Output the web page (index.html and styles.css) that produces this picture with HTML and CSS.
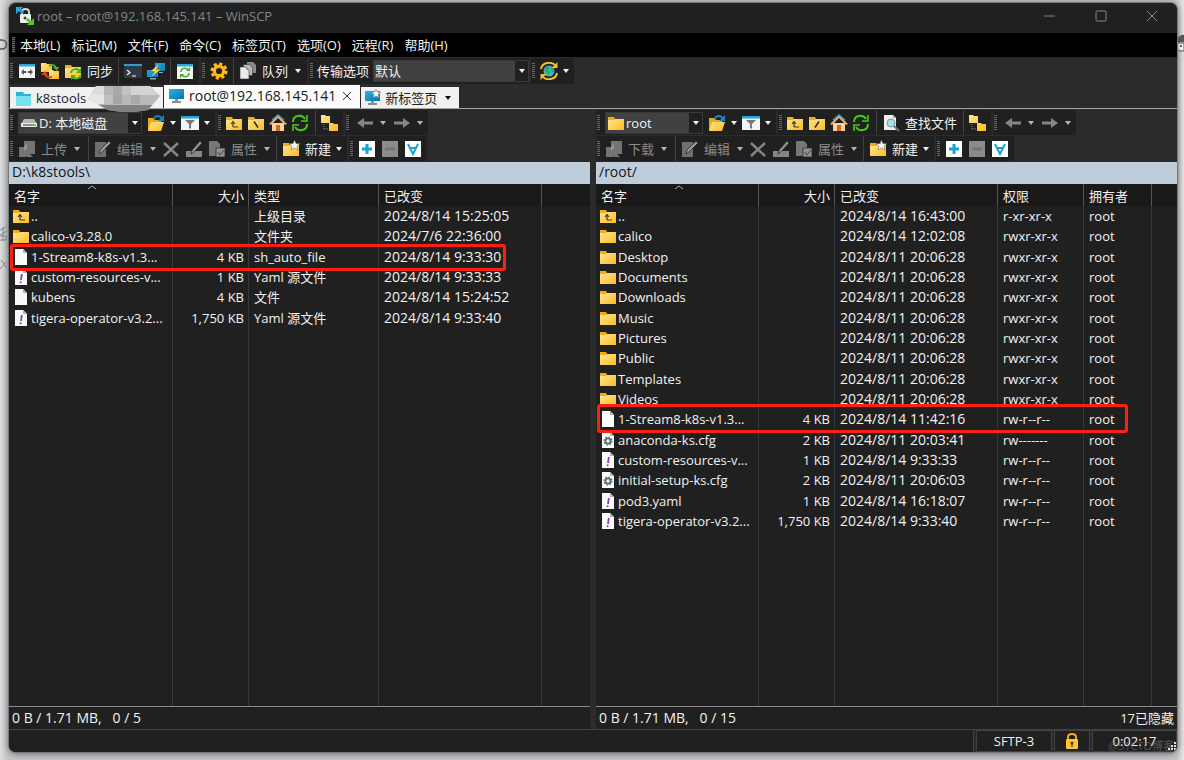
FILE: index.html
```html
<!DOCTYPE html>
<html lang="zh-CN">
<head>
<meta charset="utf-8">
<title>root – root@192.168.145.141 – WinSCP</title>
<link rel="stylesheet" href="styles.css">
</head>
<body>
<svg class="defs" aria-hidden="true">
  <defs>
    <linearGradient id="gold" x1="0" y1="0" x2="1" y2="1"><stop offset="0" stop-color="#ffe596"/><stop offset="1" stop-color="#fbbd1e"/></linearGradient>
    <linearGradient id="screen" x1="0" y1="0" x2="1" y2="1"><stop offset="0" stop-color="#27b7dc"/><stop offset="1" stop-color="#0d6fb5"/></linearGradient>
    <symbol id="folder" viewBox="0 0 18 18"><path d="M1 3h6l1 2h9v11H1z" fill="#f5ac12"/><path d="M1 6h6l1-1h9v11H1z" fill="url(#gold)"/></symbol>
    <symbol id="folder-up" viewBox="0 0 18 18"><use href="#folder"/><path d="M8 13V8M6 10l2-2.500 2 2.500M8 13h5" fill="none" stroke="#4a3c18" stroke-width="1.200"/></symbol>
    <symbol id="folder-root" viewBox="0 0 18 18"><use href="#folder"/><path d="M7 7.500l4 6" stroke="#2c2616" stroke-width="1.500"/></symbol>
    <symbol id="folder-slash" viewBox="0 0 18 18"><use href="#folder"/><path d="M11 7.500l-4 6" stroke="#2c2616" stroke-width="1.500"/></symbol>
    <symbol id="folder-open" viewBox="0 0 18 18"><path d="M1 4h5l2 2h6v10H1z" fill="#f0a80f"/><path d="M4 8h13l-3 9H1z" fill="url(#gold)"/><path d="M7 5c1-4 6-4 8 0" fill="none" stroke="#1b82c6" stroke-width="2"/><path d="M17 1v6h-6z" fill="#1b82c6"/></symbol>
    <symbol id="folder-new" viewBox="0 0 18 18"><use href="#folder"/><path d="M12.500 0l1.500 3.500 4 .300-3 2.500 1 3.700-3.500-2-3.500 2 1-3.700-3-2.500 4-.300z" fill="#f7f7f7" stroke="#555" stroke-width=".5"/></symbol>
    <symbol id="panels" viewBox="0 0 18 18"><path d="M1 2h16v14H1z" fill="#f4f4f4"/><path d="M1 2h16v2.500H1z" fill="#27a9da"/><path d="M3 10l3-3v2h6V7l3 3-3 3v-2H6v2z" fill="#555"/><path d="M9 6v8" stroke="#fff" stroke-width="1.500"/></symbol>
    <symbol id="compare" viewBox="0 0 18 18"><path d="M0 1h5l1 1h5v8H0z" fill="url(#gold)"/><path d="M8 8h4l1 1h5v8H8z" fill="url(#gold)"/><path d="M8 4c3-2 6-1 7 2" fill="none" stroke="#44b51b" stroke-width="2"/><path d="M12 5h6l-2 4z" fill="#44b51b"/><path d="M11 15c-4 1-6 0-7-3" fill="none" stroke="#dc431c" stroke-width="2"/><path d="M0 13l4-4 3 4z" fill="#dc431c"/></symbol>
    <symbol id="folder-sync" viewBox="0 0 18 18"><use href="#folder"/><path d="M7 11c1-5 7-5 9-1M17 13c-2 5-8 4-9 1" fill="none" stroke="#48b31c" stroke-width="2"/><path d="M17 6v5h-5zM7 18v-5h5z" fill="#48b31c"/></symbol>
    <symbol id="console" viewBox="0 0 18 18"><path d="M0 2h18v14H0z" fill="#323a45"/><path d="M0 2h18v2H0z" fill="#2b9fce"/><path d="M3 8l3 2.500L3 13M8 14h4" fill="none" stroke="#f4f4f4" stroke-width="1.200"/></symbol>
    <symbol id="putty" viewBox="0 0 18 18"><path d="M8 1h10v8H8zM0 8h11v7H0z" fill="url(#screen)"/><path d="M3 16h6v1.500H3zM12 10h4v1h-4z" fill="#9ba4ad"/><path d="M12 2L4 9l4 .500L4 15l9-7-4-.500z" fill="#ffd33b"/></symbol>
    <symbol id="arrows" viewBox="0 0 18 18"><path d="M2 8c0-7 9-8 12-3M16 10c0 7-9 8-12 3" fill="none" stroke="currentColor" stroke-width="2"/><path d="M16 1v6h-6M2 17v-6h6" fill="none" stroke="currentColor" stroke-width="1.600"/></symbol>
    <symbol id="keep-sync" viewBox="0 0 18 18"><path d="M1 2h16v15H1z" fill="#f5f5f5"/><path d="M1 2h16v2.500H1z" fill="#2da9d8"/><path d="M5 10c0-4 5-5 7-2M13 11c0 4-5 5-7 2" fill="none" stroke="#46ac22" stroke-width="1.500"/><path d="M14 5v4h-4zM4 16v-4h4z" fill="#46ac22"/></symbol>
    <symbol id="gear" viewBox="0 0 18 18"><circle cx="9" cy="9" r="4.800" fill="none" stroke="#ffb916" stroke-width="3.400"/><circle cx="9" cy="9" r="7.300" fill="none" stroke="#ffb916" stroke-width="2.600" stroke-dasharray="3.200 2.530"/></symbol>
    <symbol id="queue" viewBox="0 0 18 18"><path d="M8 0h6l3 3v8H8z" fill="#8b8b8b"/><path d="M4.500 2.500h6l3 3v8h-9z" fill="#bcbcbc" stroke="#333" stroke-width=".6"/><path d="M1 5h6l3 3v9H1z" fill="#ececec" stroke="#333" stroke-width=".6"/><path d="M7 5v3h3" fill="#999"/></symbol>
    <symbol id="globe" viewBox="0 0 18 18"><circle cx="9" cy="9" r="5.500" fill="#36b8d4"/><path d="M5 6l3-2 2 2-2 2 2 3-2 2-3-4zM11 5l3 2v4l-3-2z" fill="#3fa344"/><path d="M1 7c1-7 11-8 15-3M17 11c-1 7-11 8-15 3" fill="none" stroke="#f8bf28" stroke-width="2"/><path d="M17.500 0v6h-6zM.500 18v-6h6z" fill="#f8bf28"/></symbol>
    <symbol id="drive" viewBox="0 0 18 18"><path d="M4 5h10l3 5H1z" fill="#b6b6b6"/><rect x="1" y="9" width="16" height="4" rx="1" fill="#ededed"/><path d="M3 11h11" stroke="#333"/><path d="M14 10h2v2h-2z" fill="#52e226"/></symbol>
    <symbol id="filter" viewBox="0 0 18 18"><path d="M0 2h18v14H0z" fill="#f4f4f4"/><path d="M0 2h18v2.500H0z" fill="#20a6d8"/><path d="M4 6h10l-4 4v5l-2-1v-4z" fill="#777"/></symbol>
    <symbol id="home" viewBox="0 0 18 18"><path d="M3 9h12v8H3z" fill="#f8d5a0"/><path d="M7 11h4v6H7z" fill="#dc6422"/><path d="M0 10L9 1l9 9-2 1-7-7-7 7z" fill="#eeae65"/><path d="M3 6l6-5 6 5" fill="none" stroke="#409dcc" stroke-width="1.500"/></symbol>
    <symbol id="tree" viewBox="0 0 18 18"><path d="M1 1h4l1 1h4v7H1zM9 9h4l1 1h4v7H9z" fill="url(#gold)"/><path d="M4 10v5h4" fill="none" stroke="#888" stroke-dasharray="1 1"/></symbol>
    <symbol id="back" viewBox="0 0 18 18"><path d="M1 9l7-5v3.500h9v3H8V14z" fill="#858585"/></symbol>
    <symbol id="forward" viewBox="0 0 18 18"><path d="M17 9l-7-5v3.500H1v3h9V14z" fill="#858585"/></symbol>
    <symbol id="transfer" viewBox="0 0 18 18"><path d="M1 7h7v10H1zM6 1h11v13h-5l3 3H9l-3-4z" fill="#747474"/><path d="M6 7l3-3v4l-3 3" fill="#999"/></symbol>
    <symbol id="edit" viewBox="0 0 18 18"><path d="M1 2h11v15H1z" fill="#6f6f6f"/><path d="M5 14l1-4 9-9 2 2-9 9z" fill="#999" stroke="#222" stroke-width=".7"/></symbol>
    <symbol id="delete" viewBox="0 0 18 18"><path d="M2 3l14 13M16 3L2 16" stroke="#858585" stroke-width="2.400"/></symbol>
    <symbol id="rename" viewBox="0 0 18 18"><path d="M1 11h16v6H1z" fill="#858585"/><path d="M6 14l1-4 8-9 2 2-8 9z" fill="#929292" stroke="#222" stroke-width=".7"/></symbol>
    <symbol id="properties" viewBox="0 0 18 18"><path d="M1 1h8l3 3v12H1z" fill="#777"/><path d="M8 8h9v9H8z" fill="#929292" stroke="#222" stroke-width=".7"/><path d="M10 12l2 3 4-5" fill="none" stroke="#444"/></symbol>
    <symbol id="find" viewBox="0 0 18 18"><path d="M2 1h9l3 3v12H2z" fill="#efefef"/><path d="M11 1v3h3" fill="#aaa"/><circle cx="9" cy="9" r="4" fill="#9fe2ee" stroke="#8a9699"/><path d="M12 12l5 5" stroke="#63777d" stroke-width="2"/></symbol>
    <symbol id="plus" viewBox="0 0 18 18"><path d="M1 1h16v16H1z" fill="#fff"/><path d="M9 4v10M4 9h10" stroke="#18a3d5" stroke-width="3"/></symbol>
    <symbol id="minus" viewBox="0 0 18 18"><path d="M1 1h16v16H1z" fill="#8b8b8b"/><path d="M4 9h10" stroke="#747474" stroke-width="3"/></symbol>
    <symbol id="select-all" viewBox="0 0 18 18"><path d="M1 1h16v16H1z" fill="#fff"/><path d="M4 4l5 10 5-10M6 8h6" fill="none" stroke="#18a3d5" stroke-width="2"/></symbol>
    <symbol id="file" viewBox="0 0 18 18"><path d="M3 1h8l4 4v12H3z" fill="#fafafa"/><path d="M11 1v4h4z" fill="#b5b5b5"/></symbol>
    <symbol id="yaml" viewBox="0 0 18 18"><use href="#file"/><path d="M9.800 6L9 12" stroke="#8242ab" stroke-width="1.800"/><circle cx="8.600" cy="14.200" r="1" fill="#8242ab"/></symbol>
    <symbol id="config" viewBox="0 0 18 18"><use href="#file"/><circle cx="9" cy="10" r="2.600" fill="none" stroke="#526a76" stroke-width="1.800"/><circle cx="9" cy="10" r="4" fill="none" stroke="#526a76" stroke-width="1.200" stroke-dasharray="1.500 1.640"/></symbol>
    <symbol id="monitor" viewBox="0 0 18 18"><path d="M2 2h15v10H2z" fill="url(#screen)"/><path d="M8 12h3v2h3v2H5v-2h3z" fill="#879198"/></symbol>
    <symbol id="monitor-new" viewBox="0 0 18 18"><use href="#monitor"/><path d="M13 0l1.300 3 3.500.300-2.800 2.200 1 3.500-3-2-3 2 1-3.500L8.200 3.300l3.500-.300z" fill="#fff" stroke="#777" stroke-width=".6"/></symbol>
    <symbol id="local-tab" viewBox="0 0 18 18"><path d="M2 3h7l1 2h7v12H2z" fill="#2eb2d1"/><path d="M2 7h15v10H2z" fill="#76e2ef"/></symbol>
    <symbol id="winscp" viewBox="0 0 18 18"><path d="M6 8V5c0-4 7-4 7 0v3" fill="none" stroke="#cfd2d4" stroke-width="2"/><rect x="4" y="7" width="11" height="9" rx="1" fill="#edeff0"/><path d="M0 0h7L5 2l3 3-2 2-3-3-3 3z" fill="#24a8dc"/><path d="M18 18h-7l2-2-3-3 2-2 3 3 3-3z" fill="#54c821"/><circle cx="9" cy="11" r="1.500" fill="#444"/></symbol>
    <symbol id="lock" viewBox="0 0 18 18"><path d="M5 8V5c0-4 8-4 8 0v3" fill="none" stroke="#e9ad21" stroke-width="2"/><rect x="3" y="7" width="12" height="10" rx="1" fill="#ffc42f"/><circle cx="9" cy="11" r="1.500" fill="#453811"/><path d="M9 11v4" stroke="#453811" stroke-width="1.200"/></symbol>
  </defs>
</svg>
<svg class="backdrop-left" viewBox="0 0 9 240" aria-hidden="true"><path d="M0 2h2a4 4 0 0 1 0 9H0" fill="none" stroke="#555" stroke-width="1.500"/><path d="M0 192l6-3M0 197l7-4M0 202h6v-4H0M3 189v14M0 231l6-7M1 222l6 8" fill="none" stroke="#868b93"/></svg>
<svg class="backdrop-right" viewBox="0 0 7 20" aria-hidden="true"><path d="M0 8V5q4-5 7-4v7z" fill="#555"/><path d="M0 9h7v8H2l-2-3z" fill="#fff" stroke="#555"/><circle cx="4" cy="12" r="1" fill="#444"/></svg>
<div class="window">
  <header class="titlebar">
    <svg class="icon"><use href="#winscp"/></svg>
    <h1 class="title">root – root@192.168.145.141 – WinSCP</h1>
    <div class="window-buttons">
      <button class="window-button" aria-label="最小化"><svg class="glyph" viewBox="0 0 12 12"><path d="M0 6h11"/></svg></button>
      <button class="window-button" aria-label="最大化"><svg class="glyph" viewBox="0 0 12 12"><rect x="1" y="1" width="10" height="10" rx="1"/></svg></button>
      <button class="window-button" aria-label="关闭"><svg class="glyph" viewBox="0 0 12 12"><path d="M1 1l10 10M11 1L1 11"/></svg></button>
    </div>
  </header>
  <nav class="menu">
    <span class="grip"></span>
    <button>本地(L)</button><button>标记(M)</button><button>文件(F)</button><button>命令(C)</button><button>标签页(T)</button><button>选项(O)</button><button>远程(R)</button><button>帮助(H)</button>
  </nav>
  <div class="toolbar main-toolbar">
    <div class="band">
      <span class="grip"></span>
      <button aria-label="同步浏览"><svg class="icon"><use href="#panels"/></svg></button>
      <button aria-label="比较目录"><svg class="icon"><use href="#compare"/></svg></button>
      <button><svg class="icon"><use href="#folder-sync"/></svg>同步</button>
      <span class="sep"></span>
      <button aria-label="控制台"><svg class="icon"><use href="#console"/></svg></button>
      <button aria-label="PuTTY"><svg class="icon"><use href="#putty"/></svg></button>
      <span class="sep"></span>
      <button aria-label="保持同步"><svg class="icon"><use href="#keep-sync"/></svg></button>
    </div>
    <div class="band">
      <span class="grip"></span>
      <button aria-label="首选项"><svg class="icon"><use href="#gear"/></svg></button>
      <span class="sep"></span>
      <button><svg class="icon"><use href="#queue"/></svg>队列<span class="arrow gap-arrow"></span></button>
    </div>
    <div class="band flush">
      <span class="grip"></span>
      <label for="transfer-mode">传输选项</label>
      <div class="combo wide"><select id="transfer-mode"><option>默认</option></select><span class="drop"><span class="arrow"></span></span></div>
    </div>
    <div class="band">
      <span class="grip"></span>
      <button aria-label="刷新会话"><svg class="icon"><use href="#globe"/></svg><span class="arrow"></span></button>
    </div>
  </div>
  <div class="tabs" role="tablist">
    <button class="tab first" role="tab"><svg class="icon"><use href="#local-tab"/></svg>k8stools
      <svg class="mosaic" viewBox="0 0 72 27" aria-hidden="true">
        <clipPath id="mosaic-clip"><path d="M8 0h54l10 10-12 14q-20 4-40 0L0 13z"/></clipPath>
        <g clip-path="url(#mosaic-clip)"><path d="M0 0h72v27H0z" fill="#b9b9b9"/><path d="M0 0h16v9H0z" fill="#ddd"/><path d="M16 0h9v9h-9z" fill="#b5b6b8"/><path d="M25 0h9v9h-9z" fill="#a9aaac"/><path d="M34 0h9v9h-9z" fill="#c2c2c3"/><path d="M43 0h29v9H43z" fill="#d3d3d3"/><path d="M0 9h16v9H0z" fill="#e6e6e6"/><path d="M16 9h9v9h-9z" fill="#bfc0c2"/><path d="M25 9h9v9h-9z" fill="#a2a5a9"/><path d="M43 9h9v9h-9z" fill="#aaa"/><path d="M0 19h72v8H0z" fill="#828282"/></g>
      </svg>
    </button>
    <button class="tab active" role="tab" aria-selected="true"><svg class="icon"><use href="#monitor"/></svg>root@192.168.145.141<svg class="tab-close" viewBox="0 0 10 10"><path d="M1 1l8 8M9 1L1 9" stroke="#333" fill="none"/></svg></button>
    <button class="tab new-tab" role="tab"><svg class="icon"><use href="#monitor-new"/></svg>新标签页<span class="arrow dark"></span></button>
  </div>
  <main class="panels">
    <section class="panel">
      <div class="toolbar nav-bar">
        <div class="band">
          <span class="grip"></span>
          <div class="combo drive-combo"><svg class="icon"><use href="#drive"/></svg><select aria-label="驱动器"><option>D: 本地磁盘</option></select><span class="drop"><span class="arrow"></span></span></div>
          <button aria-label="打开目录"><svg class="icon"><use href="#folder-open"/></svg><span class="arrow"></span></button>
          <button aria-label="筛选"><svg class="icon"><use href="#filter"/></svg><span class="arrow"></span></button>
        </div>
        <div class="band tight">
          <span class="grip"></span>
          <button aria-label="上级目录"><svg class="icon"><use href="#folder-up"/></svg></button>
          <button aria-label="根目录"><svg class="icon"><use href="#folder-root"/></svg></button>
          <button aria-label="主目录"><svg class="icon"><use href="#home"/></svg></button>
          <button class="green" aria-label="刷新"><svg class="icon"><use href="#arrows"/></svg></button>
          <span class="sep gap-sep"></span>
          <button aria-label="目录树"><svg class="icon"><use href="#tree"/></svg></button>
        </div>
        <div class="band history">
          <span class="grip"></span>
          <button aria-label="后退"><svg class="icon"><use href="#back"/></svg><span class="arrow dim"></span></button>
          <button aria-label="前进"><svg class="icon"><use href="#forward"/></svg><span class="arrow dim"></span></button>
        </div>
      </div>
      <div class="toolbar file-bar">
        <div class="band">
          <span class="grip"></span>
          <button class="off"><svg class="icon"><use href="#transfer"/></svg>上传<span class="arrow gap-arrow dim"></span></button>
          <span class="sep gap-sep"></span>
          <button class="off"><svg class="icon"><use href="#edit"/></svg>编辑<span class="arrow gap-arrow dim"></span></button>
          <button aria-label="删除"><svg class="icon"><use href="#delete"/></svg></button>
          <button aria-label="重命名"><svg class="icon"><use href="#rename"/></svg></button>
          <button class="off"><svg class="icon"><use href="#properties"/></svg>属性<span class="arrow gap-arrow dim"></span></button>
          <span class="sep"></span>
          <button><svg class="icon"><use href="#folder-new"/></svg>新建<span class="arrow"></span></button>
        </div>
        <div class="band">
          <span class="grip"></span>
          <button aria-label="选择"><svg class="icon"><use href="#plus"/></svg></button>
          <button aria-label="取消选择"><svg class="icon"><use href="#minus"/></svg></button>
          <button aria-label="全选"><svg class="icon"><use href="#select-all"/></svg></button>
        </div>
      </div>
      <div class="path">D:\k8stools\</div>
      <div class="list">
        <table>
          <colgroup><col class="c-name-local"><col class="c-size"><col class="c-type"><col class="c-date"><col></colgroup>
          <thead><tr><th>名字<svg class="sort" viewBox="0 0 10 5"><path d="M1 4l4-3 4 3"/></svg></th><th class="num">大小</th><th>类型</th><th>已改变</th><th></th></tr></thead>
          <tbody>
            <tr><td class="name"><svg class="icon"><use href="#folder-up"/></svg>..</td><td></td><td>上级目录</td><td class="date">2024/8/14 15:25:05</td><td></td></tr>
            <tr><td class="name"><svg class="icon"><use href="#folder"/></svg>calico-v3.28.0</td><td></td><td>文件夹</td><td class="date">2024/7/6 22:36:00</td><td></td></tr>
            <tr><td class="name"><svg class="icon"><use href="#file"/></svg>1-Stream8-k8s-v1.3...</td><td class="num">4 KB</td><td>sh_auto_file</td><td class="date">2024/8/14 9:33:30</td><td></td></tr>
            <tr><td class="name"><svg class="icon"><use href="#yaml"/></svg>custom-resources-v...</td><td class="num">1 KB</td><td>Yaml 源文件</td><td class="date">2024/8/14 9:33:33</td><td></td></tr>
            <tr><td class="name"><svg class="icon"><use href="#file"/></svg>kubens</td><td class="num">4 KB</td><td>文件</td><td class="date">2024/8/14 15:24:52</td><td></td></tr>
            <tr><td class="name"><svg class="icon"><use href="#yaml"/></svg>tigera-operator-v3.2...</td><td class="num">1,750 KB</td><td>Yaml 源文件</td><td class="date">2024/8/14 9:33:40</td><td></td></tr>
            <tr class="filler"><td></td><td></td><td></td><td></td><td></td></tr>
          </tbody>
        </table>
        <span class="mark mark-local"></span>
      </div>
      <div class="summary"><span>0 B / 1.71 MB,&nbsp;&nbsp; 0 / 5</span></div>
    </section>
    <section class="panel">
      <div class="toolbar nav-bar">
        <div class="band">
          <span class="grip"></span>
          <div class="combo dir-combo"><svg class="icon"><use href="#folder"/></svg><select aria-label="远程目录"><option>root</option></select><span class="drop"><span class="arrow"></span></span></div>
          <button aria-label="打开目录"><svg class="icon"><use href="#folder-open"/></svg><span class="arrow"></span></button>
          <button aria-label="筛选"><svg class="icon"><use href="#filter"/></svg><span class="arrow"></span></button>
        </div>
        <div class="band tight">
          <span class="grip"></span>
          <button aria-label="上级目录"><svg class="icon"><use href="#folder-up"/></svg></button>
          <button aria-label="根目录"><svg class="icon"><use href="#folder-slash"/></svg></button>
          <button aria-label="主目录"><svg class="icon"><use href="#home"/></svg></button>
          <button class="green" aria-label="刷新"><svg class="icon"><use href="#arrows"/></svg></button>
          <span class="sep gap-sep"></span>
          <button class="find"><svg class="icon"><use href="#find"/></svg>查找文件</button>
          <span class="sep gap-sep"></span>
          <button aria-label="目录树"><svg class="icon"><use href="#tree"/></svg></button>
        </div>
        <div class="band history">
          <span class="grip"></span>
          <button aria-label="后退"><svg class="icon"><use href="#back"/></svg><span class="arrow dim"></span></button>
          <button aria-label="前进"><svg class="icon"><use href="#forward"/></svg><span class="arrow dim"></span></button>
        </div>
      </div>
      <div class="toolbar file-bar">
        <div class="band">
          <span class="grip"></span>
          <button class="off"><svg class="icon"><use href="#transfer"/></svg>下载<span class="arrow gap-arrow dim"></span></button>
          <span class="sep gap-sep"></span>
          <button class="off"><svg class="icon"><use href="#edit"/></svg>编辑<span class="arrow gap-arrow dim"></span></button>
          <button aria-label="删除"><svg class="icon"><use href="#delete"/></svg></button>
          <button aria-label="重命名"><svg class="icon"><use href="#rename"/></svg></button>
          <button class="off"><svg class="icon"><use href="#properties"/></svg>属性<span class="arrow gap-arrow dim"></span></button>
          <span class="sep"></span>
          <button><svg class="icon"><use href="#folder-new"/></svg>新建<span class="arrow"></span></button>
        </div>
        <div class="band">
          <span class="grip"></span>
          <button aria-label="选择"><svg class="icon"><use href="#plus"/></svg></button>
          <button aria-label="取消选择"><svg class="icon"><use href="#minus"/></svg></button>
          <button aria-label="全选"><svg class="icon"><use href="#select-all"/></svg></button>
        </div>
      </div>
      <div class="path">/root/</div>
      <div class="list">
        <table>
          <colgroup><col class="c-name"><col class="c-size"><col class="c-date"><col class="c-rights"><col class="c-owner"><col></colgroup>
          <thead><tr><th>名字<svg class="sort" viewBox="0 0 10 5"><path d="M1 4l4-3 4 3"/></svg></th><th class="num">大小</th><th>已改变</th><th>权限</th><th>拥有者</th><th></th></tr></thead>
          <tbody>
            <tr><td class="name"><svg class="icon"><use href="#folder-up"/></svg>..</td><td></td><td class="date">2024/8/14 16:43:00</td><td>r-xr-xr-x</td><td>root</td><td></td></tr>
            <tr><td class="name"><svg class="icon"><use href="#folder"/></svg>calico</td><td></td><td class="date">2024/8/14 12:02:08</td><td>rwxr-xr-x</td><td>root</td><td></td></tr>
            <tr><td class="name"><svg class="icon"><use href="#folder"/></svg>Desktop</td><td></td><td class="date">2024/8/11 20:06:28</td><td>rwxr-xr-x</td><td>root</td><td></td></tr>
            <tr><td class="name"><svg class="icon"><use href="#folder"/></svg>Documents</td><td></td><td class="date">2024/8/11 20:06:28</td><td>rwxr-xr-x</td><td>root</td><td></td></tr>
            <tr><td class="name"><svg class="icon"><use href="#folder"/></svg>Downloads</td><td></td><td class="date">2024/8/11 20:06:28</td><td>rwxr-xr-x</td><td>root</td><td></td></tr>
            <tr><td class="name"><svg class="icon"><use href="#folder"/></svg>Music</td><td></td><td class="date">2024/8/11 20:06:28</td><td>rwxr-xr-x</td><td>root</td><td></td></tr>
            <tr><td class="name"><svg class="icon"><use href="#folder"/></svg>Pictures</td><td></td><td class="date">2024/8/11 20:06:28</td><td>rwxr-xr-x</td><td>root</td><td></td></tr>
            <tr><td class="name"><svg class="icon"><use href="#folder"/></svg>Public</td><td></td><td class="date">2024/8/11 20:06:28</td><td>rwxr-xr-x</td><td>root</td><td></td></tr>
            <tr><td class="name"><svg class="icon"><use href="#folder"/></svg>Templates</td><td></td><td class="date">2024/8/11 20:06:28</td><td>rwxr-xr-x</td><td>root</td><td></td></tr>
            <tr><td class="name"><svg class="icon"><use href="#folder"/></svg>Videos</td><td></td><td class="date">2024/8/11 20:06:28</td><td>rwxr-xr-x</td><td>root</td><td></td></tr>
            <tr><td class="name"><svg class="icon"><use href="#file"/></svg>1-Stream8-k8s-v1.3...</td><td class="num">4 KB</td><td class="date">2024/8/14 11:42:16</td><td>rw-r--r--</td><td>root</td><td></td></tr>
            <tr><td class="name"><svg class="icon"><use href="#config"/></svg>anaconda-ks.cfg</td><td class="num">2 KB</td><td class="date">2024/8/11 20:03:41</td><td>rw-------</td><td>root</td><td></td></tr>
            <tr><td class="name"><svg class="icon"><use href="#yaml"/></svg>custom-resources-v...</td><td class="num">1 KB</td><td class="date">2024/8/14 9:33:33</td><td>rw-r--r--</td><td>root</td><td></td></tr>
            <tr><td class="name"><svg class="icon"><use href="#config"/></svg>initial-setup-ks.cfg</td><td class="num">2 KB</td><td class="date">2024/8/11 20:06:03</td><td>rw-r--r--</td><td>root</td><td></td></tr>
            <tr><td class="name"><svg class="icon"><use href="#yaml"/></svg>pod3.yaml</td><td class="num">1 KB</td><td class="date">2024/8/14 16:18:07</td><td>rw-r--r--</td><td>root</td><td></td></tr>
            <tr><td class="name"><svg class="icon"><use href="#yaml"/></svg>tigera-operator-v3.2...</td><td class="num">1,750 KB</td><td class="date">2024/8/14 9:33:40</td><td>rw-r--r--</td><td>root</td><td></td></tr>
            <tr class="filler"><td></td><td></td><td></td><td></td><td></td><td></td></tr>
          </tbody>
        </table>
        <span class="mark mark-remote"></span>
      </div>
      <div class="summary"><span>0 B / 1.71 MB,&nbsp;&nbsp; 0 / 15</span><span class="hidden-count">17已隐藏</span></div>
    </section>
  </main>
  <footer class="statusbar">
    <span class="status-fill"></span>
    <span class="status-cell protocol">SFTP-3</span>
    <span class="status-cell secure"><svg class="icon"><use href="#lock"/></svg></span>
    <span class="status-cell time">0:02:17</span>
    <span class="watermark">@51CTO博客</span>
    <svg class="resize" viewBox="0 0 9 9" aria-hidden="true"><path d="M7 1h2M4 4h2M7 4h2M1 7h2M4 7h2M7 7h2" stroke="#e0e0e0" stroke-width="2"/></svg>
  </footer>
</div>
</body>
</html>
```
FILE: styles.css
```css
* { box-sizing: border-box; }
body {
  margin: 0;
  height: 100vh;
  padding: 3px 7px 8px 9px;
  background: linear-gradient(90deg, #dcdddf, #c2c3c5 8px, #c2c3c5 calc(100% - 8px), #e6e6e8);
  color: #f2f2f2;
  font: 13px/18px "Open Sans", "Noto Sans", "Noto Sans CJK SC", sans-serif;
  overflow: hidden;
}
button {
  display: flex;
  align-items: center;
  gap: 5px;
  padding: 0;
  border: 0;
  background: none;
  color: inherit;
  font: inherit;
  white-space: nowrap;
}
.defs { position: absolute; width: 0; height: 0; }
.backdrop-left { position: absolute; left: 0; top: 38px; width: 9px; height: 240px; }
.backdrop-right { position: absolute; right: 0; top: 34px; width: 7px; height: 20px; }
.icon { display: block; flex: none; width: 18px; height: 18px; }
.window {
  position: relative;
  display: flex;
  flex-direction: column;
  height: 100%;
  overflow: hidden;
  border-radius: 7px;
  background: #2b2b2b;
  box-shadow: 0 0 0 1px #77797c, 0 1px 7px #555;
}
.titlebar {
  display: flex;
  align-items: center;
  gap: 3px;
  height: 30px;
  padding-left: 7px;
  padding-bottom: 4px;
  background: #202020;
}
.title { flex: 1; margin: 0; color: #858585; font-size: 13px; font-weight: 400; }
.window-buttons { display: flex; }
.window-button { justify-content: center; width: 51px; height: 26px; }
.glyph { width: 12px; height: 12px; fill: none; stroke: #858585; }
.menu {
  display: flex;
  align-items: center;
  gap: 11px;
  height: 24px;
  padding-left: 3px;
  background: #000;
}
.menu .grip { margin-right: -6px; }
.grip {
  flex: none;
  width: 3px;
  height: 16px;
  background: repeating-linear-gradient(#686868 0 1px, #202020 1px 2px);
}
.toolbar { display: flex; gap: 2px; background: #2b2b2b; }
.main-toolbar { height: 28px; padding: 1px 0; }
.band {
  display: flex;
  align-items: center;
  gap: 5px;
  padding: 0 5px 0 1px;
  background: #202020;
}
.flush { gap: 4px; padding-right: 0; }
.tight { gap: 4px; }
.history { gap: 7px; }
.history button { gap: 6px; }
.sep { align-self: stretch; width: 1px; background: #414141; }
.gap-sep { margin-left: 2px; }
.find { margin-left: 1px; }
.off { color: #8b8b8b; }
.green { color: #49c81a; }
.arrow {
  flex: none;
  border: 3px solid transparent;
  border-top: 4px solid #f2f2f2;
  border-bottom: 0;
}
.gap-arrow { margin: 0 1px 0 2px; }
.dim { border-top-color: #b5b5b5; }
.dark { border-top-color: #111; margin-left: 4px; }
.combo { display: flex; align-items: center; height: 22px; border: 1px solid #383838; background: #414141; }
.combo .icon { margin-left: 1px; }
.combo select {
  flex: 1;
  min-width: 0;
  padding: 0 0 0 1px;
  border: 0;
  appearance: none;
  background: #414141;
  color: #f2f2f2;
  font: inherit;
}
.drop { display: flex; align-items: center; justify-content: center; width: 13px; align-self: stretch; background: #202020; }
.wide { width: 156px; }
.drive-combo { width: 124px; }
.dir-combo { width: 98px; }
.tabs {
  display: flex;
  align-items: flex-end;
  gap: 1px;
  height: 24px;
  padding-left: 1px;
  border-bottom: 1px solid #a5a5a5;
}
.tab {
  position: relative;
  height: 21px;
  padding: 0 8px 0 2px;
  gap: 4px;
  background: #f1f1f1;
  color: #202020;
}
.first { width: 153px; padding-left: 4px; }
.active { height: 23px; gap: 4px; padding: 0 8px 2px 3px; background: #fbfbfb; font-size: 14px; }
.new-tab { width: 98px; }
.tab-close { width: 10px; height: 10px; margin-left: 2px; }
.mosaic { position: absolute; left: 78px; top: -1px; width: 72px; height: 27px; z-index: 1; }
.panels { flex: 1; min-height: 0; display: grid; grid-template-columns: 1fr 1fr; gap: 6px; }
.panel { display: flex; flex-direction: column; min-width: 0; min-height: 0; }
.nav-bar { height: 27px; padding: 1px 0; }
.file-bar { height: 26px; padding-bottom: 1px; }
.path {
  height: 22px;
  padding: 1px 3px;
  background: #bfcddb;
  color: #151515;
  font-size: 14px;
}
.list { position: relative; flex: 1; min-height: 0; background: #202020; border-bottom: 1px solid #8b8b8b; }
table { width: 100%; height: 100%; table-layout: fixed; border-collapse: separate; border-spacing: 0; }
.c-name-local { width: 164px; }
.c-name { width: 163px; }
.c-size { width: 76px; }
.c-type { width: 130px; }
.c-date { width: 163px; }
.c-rights { width: 86px; }
.c-owner { width: 68px; }
th {
  position: relative;
  height: 22px;
  padding: 1px 4px 0 5px;
  border-right: 1px solid #555;
  background: #191919;
  text-align: left;
  font-weight: 400;
}
td {
  height: 20px;
  padding: 0 4px 0 5px;
  border-right: 1px solid #333940;
  white-space: nowrap;
  overflow: hidden;
  line-height: 20px;
}
tr:nth-child(3n) td { height: 21px; }
tr.filler td { height: auto; }
th:last-child, td:last-child { border-right: 0; }
.num { text-align: right; }
td.date { font-size: 14px; }
.name .icon { display: inline-block; margin: 1px 1px 1px -2px; vertical-align: top; }
.sort { position: absolute; left: 78px; top: 1px; width: 10px; height: 5px; fill: none; stroke: #aaa; }
.mark { position: absolute; border: 3px solid #fb2112; border-radius: 3px; }
.mark-local { left: 1px; top: 60px; width: 496px; height: 27px; }
.mark-remote { left: 1px; top: 220px; width: 531px; height: 29px; }
.summary { display: flex; justify-content: space-between; height: 22px; padding: 2px 3px; background: #202020; font-size: 14px; }
.hidden-count { font-size: 13px; }
.statusbar { position: relative; display: flex; gap: 2px; height: 23px; border-top: 1px solid #414141; background: #2b2b2b; }
.status-fill { flex: 1; background: #202020; border-right: 1px solid #414141; }
.status-cell { display: flex; align-items: center; justify-content: center; border: 1px solid #414141; background: #202020; }
.protocol { width: 76px; }
.secure { width: 36px; }
.time { width: 85px; }
.watermark { position: absolute; right: 3px; bottom: -3px; color: #777; font-size: 11px; opacity: .6; white-space: nowrap; }
.resize { position: absolute; right: 1px; bottom: 1px; width: 9px; height: 9px; }
```
